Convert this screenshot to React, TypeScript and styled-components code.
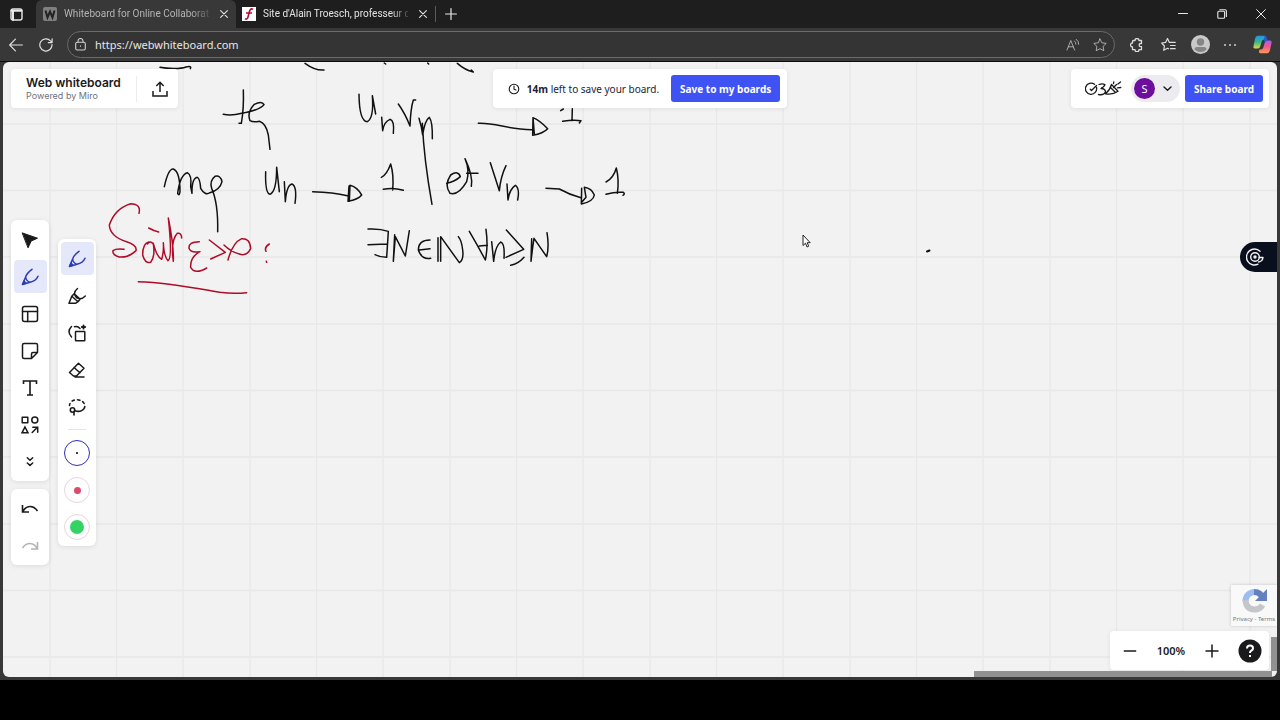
import React from "react";
import styled, { createGlobalStyle } from "styled-components";

const GlobalStyle = createGlobalStyle`
  * { box-sizing: border-box; }
  body { margin: 0; background: #000; font-family: "Noto Sans", "Open Sans", sans-serif; }
  button { border: 0; padding: 0; background: none; color: inherit; font: inherit; cursor: pointer; }
  svg { display: block; flex: none; }
`;

const Screen = styled.div`
  min-height: 100vh;
  padding-bottom: 40px;
  display: flex;
  flex-direction: column;
  background: #000;
`;

const Browser = styled.div`
  flex: 1;
  display: flex;
  flex-direction: column;
  background: #383838;
`;

const TabStrip = styled.header`
  height: 28px;
  display: flex;
  align-items: stretch;
  background: #1e1e1e;
  color: #e8e8e8;
`;

const TabMenu = styled.button`
  width: 36px;
  padding-right: 3px;
  display: grid;
  place-items: center;
`;

const Tab = styled.div<{ $active?: boolean }>`
  width: ${(p) => (p.$active ? 200 : 199)}px;
  padding: 0 4px 0 ${(p) => (p.$active ? 7 : 6)}px;
  display: flex;
  align-items: center;
  gap: 7px;
  border-radius: 6px 6px 0 0;
  background: ${(p) => (p.$active ? "#383838" : "transparent")};
  color: ${(p) => (p.$active ? "#b4b4b4" : "#e4e4e4")};
`;

const TabLabel = styled.span`
  flex: 1;
  min-width: 0;
  white-space: nowrap;
  font: 10px/16px Roboto, sans-serif;
  mask-image: linear-gradient(to right, #000 88%, rgba(0, 0, 0, 0.2));
`;

const TabClose = styled.button`
  width: 16px;
  height: 20px;
  display: grid;
  place-items: center;
  color: #e4e4e4;
`;

const NewTab = styled.button`
  width: 30px;
  display: grid;
  place-items: center;
`;

const Divider = styled.span`
  width: 1px;
  height: 16px;
  align-self: center;
  background: #5a5a5a;
`;

const WindowButtons = styled.div`
  margin-left: auto;
  display: flex;
`;

const WindowButton = styled.button`
  width: 39px;
  display: grid;
  place-items: center;
`;

const NavBar = styled.nav`
  height: 34px;
  padding: 0 11px 0 8px;
  display: flex;
  align-items: center;
  gap: 14px;
  background: #383838;
  border-bottom: 1px solid #0c0c0c;
  color: #dedede;
`;

const NavButton = styled.button`
  width: 16px;
  height: 20px;
  display: grid;
  place-items: center;
`;

const AddressBox = styled.div`
  flex: 1;
  height: 27px;
  margin-left: -1px;
  padding: 0 6px;
  display: flex;
  align-items: center;
  gap: 8px;
  border: 1px solid #6b6b6b;
  border-radius: 14px;
  background: #343434;
  color: #cfcfcf;
`;

const AddressInput = styled.input`
  flex: 1;
  min-width: 0;
  height: 20px;
  padding: 0;
  border: 0;
  outline: 0;
  background: transparent;
  color: #e6e6e6;
  font: 11px/20px "Noto Sans", sans-serif;
`;

const NavActions = styled.div<{ $gap: number }>`
  display: flex;
  align-items: center;
  gap: ${(p) => p.$gap}px;
`;

const Board = styled.main`
  position: relative;
  flex: 1;
  margin: 0 3px 3px;
  padding: 7px 0 6px 8px;
  display: flex;
  flex-direction: column;
  border-radius: 6px;
  overflow: hidden;
  background: #f2f2f2;
  color: #1a1a1c;
`;

const Ink = styled.svg`
  position: absolute;
  inset: 0;
  width: 100%;
  height: 100%;
`;

const Pointer = styled.svg`
  position: absolute;
  left: 799px;
  top: 172px;
`;

const TopRow = styled.div`
  position: relative;
  padding-right: 8px;
  display: grid;
  grid-template-columns: 1fr auto 1fr;
`;

const Panel = styled.section`
  height: 39px;
  display: flex;
  align-items: center;
  border-radius: 4px;
  background: #fff;
  box-shadow: 0 1px 5px rgba(30, 30, 50, 0.08);
`;

const BrandPanel = styled(Panel)`
  justify-self: start;
  width: 167px;
  padding-left: 15px;
`;

const Brand = styled.div`
  width: 111px;
  border-right: 1px solid #ececf0;
`;

const BrandName = styled.h1`
  margin: 0;
  font: 600 12px/14px Inter, sans-serif;
  white-space: nowrap;
`;

const BrandNote = styled.p`
  margin: 0;
  font: 9px/12px Inter, sans-serif;
  color: #6f7180;
`;

const ExportButton = styled.button`
  flex: 1;
  height: 32px;
  padding-left: 5px;
  display: grid;
  place-items: center;
`;

const NoticePanel = styled(Panel)`
  padding: 0 7px 0 15px;
`;

const NoticeText = styled.p`
  margin: 0 12px 0 7px;
  font: 10px/16px "Noto Sans", sans-serif;
  white-space: nowrap;
  color: #222235;
`;

const PrimaryButton = styled.button<{ $width: number }>`
  width: ${(p) => p.$width}px;
  height: 27px;
  border-radius: 3px;
  background: #3f53f5;
  color: #fff;
  font: 700 10px/16px "Noto Sans", sans-serif;
  white-space: nowrap;
`;

const SharePanel = styled(Panel)`
  justify-self: end;
  padding: 0 6px 0 14px;
  gap: 5px;
`;

const UserMenu = styled.button`
  width: 49px;
  height: 27px;
  margin-left: 4px;
  padding: 0 8px 0 3px;
  display: flex;
  align-items: center;
  justify-content: space-between;
  border-radius: 14px;
  background: #ececf0;
`;

const Avatar = styled.span`
  width: 21px;
  height: 21px;
  border-radius: 50%;
  background: #6b0f9c;
  color: #fff;
  font: 11px/21px "Noto Sans", sans-serif;
  text-align: center;
`;

const Body = styled.div`
  position: relative;
  flex: 1;
  padding-top: 6px;
  display: flex;
  gap: 9px;
`;

const ToolColumn = styled.div`
  align-self: center;
  display: flex;
  flex-direction: column;
  gap: 8px;
`;

const ToolGroup = styled.div`
  width: 38px;
  padding: 3px 0;
  display: flex;
  flex-direction: column;
  align-items: center;
  gap: 4px;
  border-radius: 6px;
  background: #fff;
  box-shadow: 0 1px 5px rgba(30, 30, 50, 0.1);
`;

const Tool = styled.button<{ $active?: boolean; $muted?: boolean }>`
  width: 33px;
  height: 33px;
  display: grid;
  place-items: center;
  border-radius: 4px;
  background: ${(p) => (p.$active ? "#e5e8fb" : "transparent")};
  color: ${(p) => (p.$active ? "#2b3bb0" : p.$muted ? "#b3b3b8" : "#1a1a1c")};
`;

const ToolRule = styled.hr`
  width: 18px;
  height: 1px;
  margin: 2px 0;
  border: 0;
  background: #e3e3e8;
`;

const Swatch = styled.button<{ $ring: string; $dot: string; $size: number }>`
  width: 26px;
  height: 26px;
  margin: 4px 0 3px;
  display: grid;
  place-items: center;
  border: 1px solid ${(p) => p.$ring};
  border-radius: 50%;
  &::after {
    content: "";
    width: ${(p) => p.$size}px;
    height: ${(p) => p.$size}px;
    border-radius: 50%;
    background: ${(p) => p.$dot};
  }
`;

const SideColumn = styled.div`
  margin-left: auto;
  display: flex;
  flex-direction: column;
  align-items: flex-end;
`;

const SideTab = styled.button`
  width: 37px;
  height: 30px;
  margin-top: 128px;
  padding-left: 6px;
  display: flex;
  align-items: center;
  border-radius: 15px 0 0 15px;
  background: #0a0f1e;
  color: #f2f2f2;
`;

const Captcha = styled.aside`
  width: 46px;
  height: 41px;
  margin-top: auto;
  padding-top: 2px;
  display: flex;
  flex-direction: column;
  align-items: center;
  background: #f9f9f9;
  box-shadow: 0 0 3px rgba(0, 0, 0, 0.2);
`;

const CaptchaText = styled.p`
  margin: 2px 0 0;
  font: 6px/7px "Noto Sans", sans-serif;
  color: #777;
  white-space: nowrap;
`;

const ZoomPanel = styled(Panel)`
  width: 159px;
  margin: 5px 8px 1px 0;
  padding: 0 7px 0 12px;
  gap: 11px;
`;

const ZoomButton = styled.button`
  width: 16px;
  height: 24px;
  display: grid;
  place-items: center;
`;

const HelpButton = styled.button`
  margin-left: auto;
`;

const ZoomValue = styled.output`
  width: 44px;
  text-align: center;
  font: 600 11px/16px "Noto Sans", sans-serif;
`;

const ScrollX = styled.div`
  position: absolute;
  right: 5px;
  bottom: 0;
  width: 298px;
  height: 6px;
  background: #919191;
`;

const ScrollY = styled.div`
  position: absolute;
  right: 0;
  bottom: 6px;
  width: 6px;
  height: 34px;
  background: #919191;
`;

type IconProps = { size?: number; width?: number; children: React.ReactNode };

function Icon({ size = 18, width = 1.5, children }: IconProps) {
  return (
    <svg
      width={size}
      height={size}
      viewBox={`0 0 ${size} ${size}`}
      fill="none"
      stroke="currentColor"
      strokeWidth={width}
      strokeLinecap="round"
      strokeLinejoin="round"
      aria-hidden="true"
    >
      {children}
    </svg>
  );
}

const Cross = () => (
  <Icon size={8} width={1.1}><path d="M.6.6l6.8 6.8M7.4.6L.6 7.4" /></Icon>
);

const PenIcon = () => (
  <Icon width={1.5}>
    <path d="M11 1.300C7.500 3.800 5.300 6.500 4.600 9L1.500 16.500 9 14.300C12.500 13.500 15.500 11.500 17 8.200M4.600 9C5 11.500 6.500 13.500 9 14.300" />
    <path d="M3.200 12.600L5.600 15.300 1.500 16.500z" fill="currentColor" strokeWidth=".6" />
  </Icon>
);

const HighlighterIcon = () => (
  <Icon>
    <path d="M9.500 1.500C6.500 4 5.800 6 7 8.500 9 12.500 13.500 13 17.300 9M6.300 6.500L3.800 9.300 10 14.700 12.300 12M3.800 9.300L1 16.300H7.500L10 14.700M6.500 7L12 12" />
  </Icon>
);

const inkBlack = [
  "M180 22C200 26 240 28 258 21Q276 17 271 26",
  "M615 10Q645 32 672 30",
  "M430 90Q432 145 424 190L417 190",
  "M370 163Q395 168 425 160Q480 150 492 134Q486 122 463 133Q440 158 450 182Q460 188 478 184Q498 190 505 225L510 268",
  "M193 380Q205 325 220 327Q240 335 240 395Q238 410 233 400Q240 345 262 338Q276 345 272 380L276 400Q275 355 292 352Q300 355 302 385Q315 408 330 398Q360 390 366 365Q362 345 345 349Q328 362 335 385Q355 430 353 515",
  "M497 335Q495 400 510 403Q530 395 530 322L538 395",
  "M553 365L556 425Q560 375 576 372Q592 380 585 430",
  "M638 395Q700 397 742 407M747 378L744 424Q775 418 785 405Q770 380 750 376L748 424",
];

const inkRed = [
  "M117 460Q124 432 92 431Q45 445 28 495Q30 530 80 545Q112 555 108 572Q85 594 58 591Q36 585 39 572Q48 565 72 568",
  "M146 546Q128 550 128 585Q135 612 152 607Q166 590 160 552Q150 540 142 552M160 550Q170 590 185 598Q192 575 190 548Q192 590 204 602Q218 595 205 474Q222 560 220 604Q212 540 232 520Q245 518 245 534",
  "M146 504Q160 512 176 516",
  "M298 545Q265 545 267 565Q272 580 300 575Q270 590 272 622Q285 645 320 624",
  "M328 540L376 577L332 597M384 600Q398 548 425 536Q450 534 452 566Q440 590 418 582Q392 575 372 555",
  "M115 665C210 668 290 685 360 697Q400 702 440 698",
  "M508 552Q492 562 498 574M499 604L500 607",
];

const inkRight = [
  "M103 9L107 12M233 9L236 12M322 10Q345 30 370 36L364 30",
  "M27 103Q28 185 52 185Q72 175 67 107L77 162",
  "M95 172L98 212Q102 185 120 178Q134 182 130 220",
  "M145 132Q165 160 180 198Q182 145 190 120L197 120",
  "M207 175Q215 200 218 225Q225 180 238 172Q248 185 247 236M217 190Q222 300 246 433",
  "M385 190C440 188 470 208 545 209M549 173L548 226Q580 220 593 206Q570 182 549 173L553 222",
  "M632 152L640 147M667 146L666 182M638 184Q670 178 693 182L688 189",
  "M94 352Q110 345 122 312Q132 345 128 390M100 388Q130 382 160 391",
  "M290 370Q315 365 331 350Q325 330 302 345Q282 375 300 400Q325 408 350 365Q360 330 345 296M345 296Q370 350 364 379M350 340L384 340",
  "M421 308L448 392Q452 350 468 317M471 372L474 420Q478 388 496 376Q510 385 503 420",
  "M588 385L628 387Q660 405 693 413M695 385L694 432Q730 425 733 405Q725 385 703 382L708 412L694 428",
  "M768 366Q790 355 799 324Q808 360 802 400M768 403Q795 395 820 397Q826 402 819 406",
  "M54 507Q90 505 115 514L110 592Q90 592 75 584M54 554L112 552",
  "M134 524L130 604L136 530L166 588L178 512",
  "M240 540Q205 540 205 570Q215 600 242 595M208 570L240 566",
  "M264 533L264 604M272 604L272 530L328 608Q342 600 338 570Q335 540 325 530",
  "M358 514Q385 560 406 600Q415 560 408 508M388 558L412 556M425 545L431 604Q435 560 452 546Q465 550 462 595",
  "M469 510L521 568L468 592M482 616Q505 612 522 592",
  "M545 536L543 604Q548 560 552 535L590 590Q598 560 591 518",
];

function BoardInk() {
  return (
    <Ink role="img" aria-label="Handwritten board notes">
      <defs>
        <pattern id="grid" width="200" height="200" x="46" y="61" patternUnits="userSpaceOnUse">
          <path d="M1 0V200M67.500 0V200M134 0V200M0 1H200M0 67.500H200M0 134H200" stroke="#e8e8e8" strokeWidth="1.300" />
        </pattern>
      </defs>
      <rect width="100%" height="100%" fill="url(#grid)" />
      <g fill="none" strokeWidth="4.500" strokeLinecap="round" strokeLinejoin="round">
        <g transform="translate(97 -2) scale(.33333)">
          {inkBlack.map((d) => <path key={d} d={d} stroke="#111" />)}
          {inkRed.map((d) => <path key={d} d={d} stroke="#ae0c28" />)}
        </g>
        <g transform="translate(347 -2) scale(.33333)" stroke="#111">
          {inkRight.map((d) => <path key={d} d={d} />)}
        </g>
        <path d="M924 189.500L926.500 188.500" stroke="#111" strokeWidth="2" />
      </g>
    </Ink>
  );
}

export default function App() {
  return (
    <Screen>
      <GlobalStyle />
      <Browser>
        <TabStrip>
          <TabMenu aria-label="Tab actions">
            <Icon size={13} width={1.4}>
              <rect x="1" y="1" width="11" height="11" rx="2" />
              <path d="M1.500 2.700h10M3 3v9" strokeWidth="2" />
            </Icon>
          </TabMenu>
          <Tab $active>
            <svg width="14" height="14" viewBox="0 0 14 14" aria-hidden="true">
              <rect width="14" height="14" rx="2" fill="#808080" />
              <path d="M2.500 3.500L4.500 10.500 7 4.500 9.500 10.500 11.500 3.500" fill="none" stroke="#222" strokeWidth="2" />
            </svg>
            <TabLabel>Whiteboard for Online Collaborat</TabLabel>
            <TabClose aria-label="Close tab"><Cross /></TabClose>
          </Tab>
          <Tab>
            <svg width="14" height="14" viewBox="0 0 14 14" aria-hidden="true">
              <rect width="14" height="14" fill="#fff" />
              <path d="M11 2.200C8.500 1.200 7.800 3 7.200 5.500L6 10C5.500 12 4.500 12.500 3 11.800M4 6H10" fill="none" stroke="#b01038" strokeWidth="1.600" />
            </svg>
            <TabLabel>Site d'Alain Troesch, professeur d</TabLabel>
            <TabClose aria-label="Close tab"><Cross /></TabClose>
          </Tab>
          <Divider />
          <NewTab aria-label="New tab">
            <Icon size={12} width={1.2}><path d="M6 .6v10.800M.6 6h10.800" /></Icon>
          </NewTab>
          <WindowButtons>
            <WindowButton aria-label="Minimize">
              <Icon size={10} width={1}><path d="M.5 4.500h9" /></Icon>
            </WindowButton>
            <WindowButton aria-label="Restore">
              <Icon size={10} width={1.1}>
                <rect x=".8" y="2.200" width="6.800" height="7" rx="1" />
                <path d="M2.800 .8h5.200a1.400 1.400 0 0 1 1.400 1.400v5.300" />
              </Icon>
            </WindowButton>
            <WindowButton aria-label="Close">
              <Icon size={10} width={1}><path d="M.6.6l8.800 8.800M9.400.6L.6 9.400" /></Icon>
            </WindowButton>
          </WindowButtons>
        </TabStrip>

        <NavBar>
          <NavButton aria-label="Back">
            <Icon size={14} width={1.2}><path d="M13.400 7H.8M6.400 1.200L.7 7l5.700 5.800" /></Icon>
          </NavButton>
          <NavButton aria-label="Refresh">
            <Icon size={14} width={1.2}><path d="M13 6.500A6.100 6.100 0 1 1 11.500 2.900L13 4.500M13.100 .8v3.800H9.300" /></Icon>
          </NavButton>
          <AddressBox>
            <Icon size={13} width={1.1}>
              <rect x="1.700" y="4.200" width="9.600" height="7.800" rx="1.500" />
              <path d="M4 4V3a2.500 2.500 0 0 1 5 0v1M6.500 7.800v.4" />
            </Icon>
            <AddressInput aria-label="Address" defaultValue="https://webwhiteboard.com" />
            <NavActions $gap={11}>
              <NavButton aria-label="Read aloud">
                <Icon size={14} width={1}><path d="M1 12L4.800 2.500 8.600 12M2.400 8.800h4.800M8.500 3q1.600 1.300 1.400 3.200M10.300 1.300q2.700 2 2.400 5" opacity=".75" /></Icon>
              </NavButton>
              <NavButton aria-label="Add to favorites">
                <Icon size={14} width={1}><path d="M7 .9l1.900 3.900 4.300.6-3.100 3 .7 4.300L7 10.700l-3.800 2 .7-4.300-3.100-3 4.300-.6z" opacity=".75" /></Icon>
              </NavButton>
            </NavActions>
          </AddressBox>
          <NavActions $gap={15}>
            <NavButton aria-label="Extensions">
              <Icon size={14} width={1.3}><path d="M3.500 2.500H5a2 2 0 0 1 4 0h2.500v3h-.8a1.500 1.500 0 0 0 0 3.200h.8v3H9a2 2 0 0 1-4 0H2.500V9a2 2 0 0 1 0-4V3.500q0-1 1-1z" /></Icon>
            </NavButton>
            <NavButton aria-label="Favorites">
              <Icon size={15} width={1.2}><path d="M7.500 11.800L6.500 11.300l-3.800 2 .7-4.300-2.700-3 3.900-.6L6.500 1.500l1.900 3.900h5.800M9.500 8.500h4.700M9.500 11.700h4.700" /></Icon>
            </NavButton>
            <NavButton aria-label="Profile">
              <svg width="19" height="19" viewBox="0 0 19 19" aria-hidden="true">
                <circle cx="9.500" cy="9.500" r="9.500" fill="#c9c9c9" />
                <circle cx="9.500" cy="7" r="3.700" fill="#858585" />
                <path d="M3.500 14.500q0-2.500 2.500-2.500h7q2.500 0 2.500 2.500-2.500 2.500-6 2.500t-6-2.500z" fill="#858585" />
              </svg>
            </NavButton>
            <NavButton aria-label="Settings">
              <Icon size={14} width={1.8}><path d="M2 7h.01M7 7h.01M12 7h.01" /></Icon>
            </NavButton>
            <NavButton aria-label="Copilot">
              <svg width="19" height="19" viewBox="0 0 19 19" aria-hidden="true">
                <defs>
                  <linearGradient id="cool" x2="0" y2="1">
                    <stop offset="0" stopColor="#2296e8" />
                    <stop offset=".5" stopColor="#34b98c" />
                    <stop offset="1" stopColor="#e8d53a" />
                  </linearGradient>
                  <linearGradient id="warm" x2="0" y2="1">
                    <stop offset="0" stopColor="#a65bf0" />
                    <stop offset=".5" stopColor="#ef5a8c" />
                    <stop offset="1" stopColor="#ff9a4d" />
                  </linearGradient>
                </defs>
                <path d="M5 .8h6.500q2 0 1.500 2l-.5 1.700h-1.500q-1.800 0-2.300 2L7.200 11.500q-.5 2-2.500 2H2Q0 13.500.5 11L2 4Q2.800.8 5 .8z" fill="url(#cool)" />
                <path d="M14.300 5.500H17q2 0 1.500 2.500L17 15q-.8 3.200-3 3.200H7.500q-2 0-1.500-2l.5-1.700H8q1.800 0 2.300-2l1.500-5q.5-2 2.500-2z" fill="url(#warm)" />
                <path d="M11.500.8q1.800 0 2.300 2l.7 2.700q-2 .2-2.700 2L11 4.500z" fill="#2a5bd0" />
              </svg>
            </NavButton>
          </NavActions>
        </NavBar>

        <Board>
          <BoardInk />
          <TopRow>
            <BrandPanel>
              <Brand>
                <BrandName>Web whiteboard</BrandName>
                <BrandNote>Powered by Miro</BrandNote>
              </Brand>
              <ExportButton aria-label="Export">
                <Icon size={16}><path d="M8 11V1.500M4.300 5L8 1.300 11.700 5M1 10v5h14v-5" strokeLinecap="butt" strokeLinejoin="miter" /></Icon>
              </ExportButton>
            </BrandPanel>
            <NoticePanel>
              <Icon size={12} width={1.1}><circle cx="6" cy="6" r="4.800" /><path d="M6 3v3.200l2 .8" /></Icon>
              <NoticeText><strong>14m</strong> left to save your board.</NoticeText>
              <PrimaryButton $width={109}>Save to my boards</PrimaryButton>
            </NoticePanel>
            <SharePanel>
              <svg width="37" height="18" viewBox="0 0 37 18" fill="none" stroke="#1a1a1c" strokeWidth="1.300" strokeLinecap="round" strokeLinejoin="round" aria-hidden="true">
                <path d="M9.500 4.300A5.600 5.600 0 1 0 11.500 7.500M5.300 9.300l1.200 1.200L11.500 5.500M14 4.500q4-1.500 6 .3-.8 2.200-4 3.700 4.500.2 4.500 3.500-1.500 3.500-7 2.500M20.500 13.800Q25 10 26.500 4.500L33 11.300Q28 15 20.500 13.800M25.500 7.500l4.800 4.800M28.500 7.500l3-3M28.500 3.500l.3-1.700M32.500 7.800l3.300-.3M33 4l2.500-2" />
              </svg>
              <UserMenu aria-label="User menu">
                <Avatar>S</Avatar>
                <Icon size={9} width={1.4}><path d="M1 3l3.500 3.300L8 3" /></Icon>
              </UserMenu>
              <PrimaryButton $width={78}>Share board</PrimaryButton>
            </SharePanel>
          </TopRow>

          <Body>
            <ToolColumn>
              <ToolGroup>
                <Tool aria-label="Select">
                  <Icon><path d="M1.500 2L16.500 7.200 10.200 10 7.200 16.500z" fill="currentColor" strokeWidth="1" /></Icon>
                </Tool>
                <Tool aria-label="Pen" $active><PenIcon /></Tool>
                <Tool aria-label="Templates">
                  <Icon><rect x="1.500" y="1.500" width="15" height="15" rx="2" /><path d="M1.500 6.500h15M6.700 6.500v10" /></Icon>
                </Tool>
                <Tool aria-label="Sticky note">
                  <Icon><path d="M3 1.500h12q1.500 0 1.500 1.500v7.500l-6 6H3q-1.500 0-1.500-1.500V3q0-1.500 1.500-1.500zM10.500 16V12q0-1.500 1.500-1.500h4" /></Icon>
                </Tool>
                <Tool aria-label="Text">
                  <Icon width={1.6}><path d="M2.500 5V2h13v3M9 2v14M6 16h6" strokeLinecap="butt" strokeLinejoin="miter" /></Icon>
                </Tool>
                <Tool aria-label="Shapes">
                  <Icon><rect x="1.200" y="1.200" width="5.600" height="5.600" /><circle cx="13.800" cy="4" r="3" /><path d="M4 11l3 5.800H1zM11.200 16.500l5-5M11.800 11.200h4.900v5" strokeLinejoin="miter" /></Icon>
                </Tool>
                <Tool aria-label="More">
                  <Icon><path d="M6.300 4.800L9 7.200l2.700-2.400M6.300 10L9 12.400l2.700-2.400" /></Icon>
                </Tool>
              </ToolGroup>
              <ToolGroup>
                <Tool aria-label="Undo">
                  <Icon width={1.6}><path d="M1.500 5v7h6.500M1.800 11.500C5 5.500 12 4.500 16.500 11" strokeLinecap="butt" strokeLinejoin="miter" /></Icon>
                </Tool>
                <Tool aria-label="Redo" $muted>
                  <Icon width={1.6}><path d="M16.500 5v7H10M16.200 11.500C13 5.500 6 4.500 1.500 11" strokeLinecap="butt" strokeLinejoin="miter" /></Icon>
                </Tool>
              </ToolGroup>
            </ToolColumn>

            <ToolColumn>
              <ToolGroup>
                <Tool aria-label="Pen" $active><PenIcon /></Tool>
                <Tool aria-label="Highlighter"><HighlighterIcon /></Tool>
                <Tool aria-label="Smart drawing">
                  <Icon><rect x="7.500" y="7.500" width="9.300" height="9.300" rx=".5" /><path d="M3.500 13Q-1.500 7.500 3.500 2.500M6.500 2.800q3-1.300 5.500 1.700" /><path d="M15.500 1.300v3.400M13.800 3h3.400" strokeWidth="1.800" /></Icon>
                </Tool>
                <Tool aria-label="Eraser">
                  <Icon><path d="M10.500 2.200l5.500 5L8.500 15H5.500L1.500 11.500zM6 6.500l6 5.200M7 16h9" /></Icon>
                </Tool>
                <Tool aria-label="Lasso">
                  <Icon width={1.6}><path d="M1.500 7.500q0-1 .5-2M4.200 3q1-.7 2-.9M9.500 1.700q1.300 0 2.400.5M14.600 3.700q1 .8 1.500 1.800M16.800 8.500C16.500 12 12 14.500 7 12.800" /><circle cx="4.500" cy="12" r="2.200" /><path d="M6 13.500v3.500" /></Icon>
                </Tool>
                <ToolRule />
                <Swatch aria-label="Thin black pen" $ring="#2a2fb4" $dot="#000" $size={2} />
                <Swatch aria-label="Red pen" $ring="#e6d6da" $dot="#dd4a6c" $size={7} />
                <Swatch aria-label="Green pen" $ring="#e6d6da" $dot="#35d266" $size={14} />
              </ToolGroup>
            </ToolColumn>

            <SideColumn>
              <SideTab aria-label="Open assistant">
                <Icon size={18} width={1.4}><circle cx="9" cy="9" r="4.300" /><circle cx="9" cy="9" r="1" fill="currentColor" /><path d="M14 3.200A8 8 0 1 0 12 16.200M13.300 9.500h3.700q-.5 4-4.500 4.500" /></Icon>
              </SideTab>
              <Captcha>
                <svg width="27" height="27" viewBox="0 0 27 27" fill="none" strokeWidth="6" aria-hidden="true">
                  <path d="M4.500 14A9 9 0 0 1 13.500 5" stroke="#9dbcf0" />
                  <path d="M13 5Q20 5 22 12" stroke="#6480bf" />
                  <path d="M26 2v12H14z" fill="#6480bf" />
                  <path d="M4.500 13Q5 22 13.500 22.500 19 22.500 21.500 18" stroke="#c4c6ca" />
                </svg>
                <CaptchaText>Privacy - Terms</CaptchaText>
              </Captcha>
              <ZoomPanel>
                <ZoomButton aria-label="Zoom out">
                  <Icon size={14}><path d="M.8 7h12.400" strokeLinecap="butt" /></Icon>
                </ZoomButton>
                <ZoomValue>100%</ZoomValue>
                <ZoomButton aria-label="Zoom in">
                  <Icon size={14}><path d="M.5 7h13M7 .5v13" strokeLinecap="butt" /></Icon>
                </ZoomButton>
                <HelpButton aria-label="Help">
                  <svg width="24" height="24" viewBox="0 0 24 24" fill="none" aria-hidden="true">
                    <circle cx="12" cy="12" r="11.500" fill="#1a1a1c" />
                    <path d="M9 9.500q0-3 3-3t3 2.700q0 1.500-1.700 2.500-1.300.8-1.300 2.300M12 16v2" stroke="#fff" strokeWidth="2" />
                  </svg>
                </HelpButton>
              </ZoomPanel>
            </SideColumn>
          </Body>
          <Pointer width="9" height="14" viewBox="0 0 9 14" aria-hidden="true">
            <path d="M1 1v10.500l2.500-2.300L5 13l1.700-.8L5.200 8.700h3z" fill="#fff" stroke="#222" strokeWidth="1" />
          </Pointer>
          <ScrollX />
          <ScrollY />
        </Board>
      </Browser>
    </Screen>
  );
}
